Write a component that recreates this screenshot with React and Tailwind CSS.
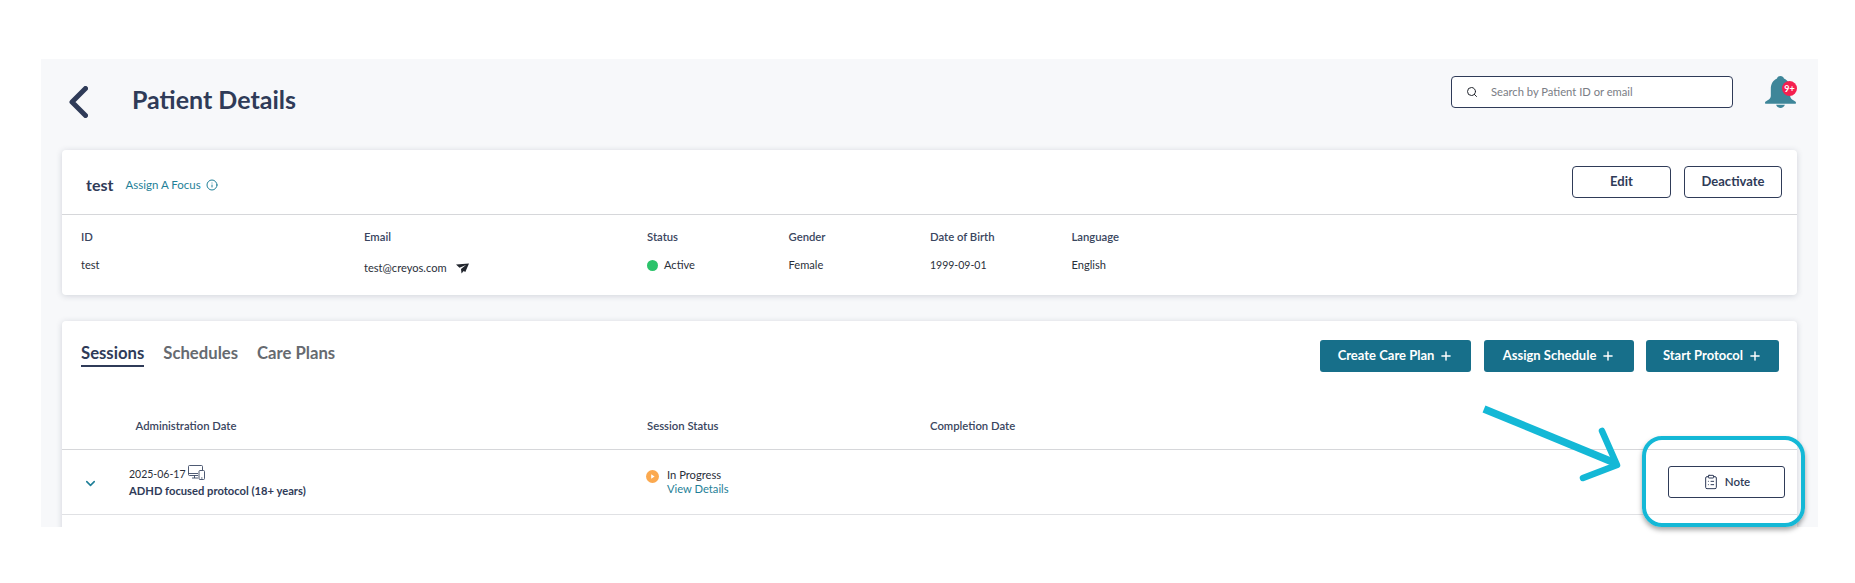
import React from 'react';
import { ChevronDown, ClipboardList, Info, Plus, Search } from 'lucide-react';

const BellIcon = () => (
  <svg width="31" height="32" viewBox="0 0 32 33" className="block">
    <path
      d="M16 0c1.8 0 3.2 1.1 3.6 2.600C23.800 4.500 26 8.500 26 13v7.500c0 2 1.400 3.300 3.300 4.400 1.700 1 2.700 1.600 2.700 2.600 0 .9-.6 1.200-1.500 1.200H1.500C.6 28.700 0 28.400 0 27.500c0-1 1-1.600 2.700-2.600C4.600 23.800 6 22.500 6 20.500V13c0-4.500 2.200-8.500 6.400-10.400C12.800 1.100 14.200 0 16 0z"
      fill="#3e8699"
    />
    <path d="M11.500 29.700h9c-.5 1.900-2.400 3.300-4.500 3.300s-4-1.400-4.500-3.300z" fill="#3e8699" />
  </svg>
);

const PlaneIcon = () => (
  <svg width="13" height="11" viewBox="0 0 13 11" className="block">
    <path d="M13 .5 0 1.500l3.500 3.200L10 2 5 6l.5 4.500 2.200-2.600 1.600 1.100z" fill="#22262e" />
  </svg>
);

const DeviceIcon = () => (
  <svg width="17" height="15" viewBox="0 0 17 15" fill="none" stroke="#3a4763" strokeWidth="0.9" className="block">
    <path d="M10 10.500H1.500a1 1 0 0 1-1-1V1.500a1 1 0 0 1 1-1h12a1 1 0 0 1 1 1V5" />
    <path d="M.5 8.500H10M4 13h6M6.500 10.500V13" />
    <rect x="11" y="5.500" width="5.500" height="9" rx="1" />
    <path d="M13 13h1.500" />
  </svg>
);

const ProgressIcon = () => (
  <svg width="13" height="13" viewBox="0 0 13 13" className="block">
    <circle cx="6.500" cy="6.500" r="6.500" fill="#fba94f" />
    <path d="M5.200 4.200 8.600 6.500 5.200 8.800z" fill="#fff" />
  </svg>
);

const Label = ({ children }) => (
  <div className="text-[11.300px] leading-4 font-semibold text-[#3a4660]">{children}</div>
);

const TealButton = ({ label, width }) => (
  <button className={`${width} h-8 flex items-center justify-center gap-[5px] rounded-[3px] bg-[#176f8a] text-white text-[13px] font-bold`}>
    {label}
    <Plus size={14} strokeWidth={2.5} />
  </button>
);

export default function App() {
  return (
    <div className="relative h-[583px] bg-white overflow-hidden text-[#2f3b58]" style={{ fontFamily: '"Lato", "Noto Sans", sans-serif' }}>
      <div className="mt-[59px] ml-[41px] w-[1777px] h-[468px] bg-[#f7f8fa] overflow-hidden">
        {/* Page header */}
        <div className="h-[91px] flex justify-between pl-[28px] pr-[21px]">
          <div className="flex items-center h-[32px] mt-[27px]">
            <svg width="19" height="32" viewBox="0 0 19 32" fill="none" stroke="#2f3b58" strokeWidth="5" strokeLinecap="round" strokeLinejoin="round">
              <path d="M16.500 2.500 3 16l13.500 13.500" />
            </svg>
            <h1 className="ml-[44px] text-[25px] font-bold leading-8 -mt-[6px]">Patient Details</h1>
          </div>
          <div className="flex pt-[17px]">
            <div className="w-[282px] h-8 flex items-center pl-[14px] rounded-[4px] border border-[#2f3b58] bg-white">
              <Search size={12} strokeWidth={2} className="text-[#22262e]" />
              <span className="ml-[13px] text-[11.200px] text-[#7a7d85]">Search by Patient ID or email</span>
            </div>
            <div className="relative ml-[32px] w-[32px]">
              <BellIcon />
              <span className="absolute left-[17px] top-[5px] w-[15px] h-[15px] rounded-full bg-[#f5204f] text-white text-[9px] font-bold leading-[15px] text-center">9+</span>
            </div>
          </div>
        </div>

        {/* Patient card */}
        <div className="mx-[21px] h-[145px] bg-white rounded-[4px] shadow-[0_1px_6px_rgba(40,50,80,0.18)]">
          <div className="h-[65px] flex justify-between border-b border-[#d6d7da] pl-[24px] pr-[15px]">
            <div className="flex items-center pt-[6px]">
              <span className="text-[16px] font-bold">test</span>
              <span className="ml-[12px] text-[11.500px] text-[#1f7f98]">Assign A Focus</span>
              <Info size={12} className="ml-[5px] text-[#1f7f98]" />
            </div>
            <div className="flex gap-[13px] pt-[16px]">
              <button className="w-[99px] h-8 rounded-[4px] border border-[#2f3b58] text-[13px] font-bold">Edit</button>
              <button className="w-[98px] h-8 rounded-[4px] border border-[#2f3b58] text-[13px] font-bold">Deactivate</button>
            </div>
          </div>
          <div className="grid grid-cols-[283px_283px_141.500px_141.500px_141.500px_141.500px] pl-[19px] pt-[14px] text-[11.100px] text-[#2a2f3a]">
            <div>
              <Label>ID</Label>
              <div className="mt-[12px] leading-4">test</div>
            </div>
            <div>
              <Label>Email</Label>
              <div className="mt-[15px] flex items-center leading-4">
                test@creyos.com
                <span className="ml-[9px]"><PlaneIcon /></span>
              </div>
            </div>
            <div>
              <Label>Status</Label>
              <div className="mt-[12px] flex items-center leading-4">
                <span className="w-[11px] h-[11px] rounded-full bg-[#2cc36b]" />
                <span className="ml-[6px]">Active</span>
              </div>
            </div>
            <div>
              <Label>Gender</Label>
              <div className="mt-[12px] leading-4">Female</div>
            </div>
            <div>
              <Label>Date of Birth</Label>
              <div className="mt-[12px] leading-4 text-[10.500px]">1999-09-01</div>
            </div>
            <div>
              <Label>Language</Label>
              <div className="mt-[12px] leading-4">English</div>
            </div>
          </div>
        </div>

        {/* Sessions card */}
        <div className="mx-[21px] mt-[26px] h-[300px] bg-white rounded-[4px] shadow-[0_1px_6px_rgba(40,50,80,0.18)]">
          <div className="flex justify-between pl-[19px] pr-[18px] pt-[19px]">
            <div className="flex gap-[19px] text-[16.700px] font-bold text-[#666a70]">
              <span className="h-[27px] leading-[26px] border-b-2 border-[#2f3b58] text-[#2f3b58]">Sessions</span>
              <span className="leading-[26px]">Schedules</span>
              <span className="leading-[26px]">Care Plans</span>
            </div>
            <div className="flex">
              <TealButton label="Create Care Plan" width="w-[151px]" />
              <div className="ml-[13px]"><TealButton label="Assign Schedule" width="w-[150px]" /></div>
              <div className="ml-[12px]"><TealButton label="Start Protocol" width="w-[133px]" /></div>
            </div>
          </div>
          <div className="h-[78px] border-b border-[#d6d7da] grid grid-cols-[511.500px_283px_1fr] items-center pt-[30px] pl-[73.500px]">
            <Label>Administration Date</Label>
            <Label>Session Status</Label>
            <Label>Completion Date</Label>
          </div>
          <div className="h-[65px] border-b border-[#e0e1e4] flex items-center pl-[21px] pr-[12px] text-[11.200px] text-[#2a2f3a]">
            <ChevronDown size={15} strokeWidth={2.5} className="text-[#1f7f98] mt-[2px]" />
            <div className="ml-[31px] w-[517px]">
              <div className="flex items-center leading-4 h-[16px] text-[10.500px]">
                2025-06-17
                <span className="ml-[2px] -mt-[2px]"><DeviceIcon /></span>
              </div>
              <div className="mt-[1px] leading-4 font-bold text-[#2f3b58]">ADHD focused protocol (18+ years)</div>
            </div>
            <div className="flex">
              <span className="mt-[2px]"><ProgressIcon /></span>
              <div className="ml-[8px] leading-[14px]">
                <div>In Progress</div>
                <div className="text-[#1f7f98]">View Details</div>
              </div>
            </div>
            <button className="ml-auto w-[117px] h-8 flex items-center justify-center gap-[6px] rounded-[3px] border border-[#2f3b58] bg-white text-[11.500px] font-semibold text-[#2f3b58]">
              <ClipboardList size={16} strokeWidth={1.5} />
              Note
            </button>
          </div>
        </div>
      </div>

      {/* Annotation */}
      <div className="absolute left-[1642px] top-[436px] w-[163px] h-[91px] rounded-[20px] border-4 border-[#14b8d6] shadow-[0_3px_5px_rgba(0,0,0,0.35)]" />
      <svg className="absolute left-[1470px] top-[400px]" width="160" height="90" viewBox="1470 400 160 90" fill="none" stroke="#14b8d6" strokeLinecap="round" strokeLinejoin="round">
        <path d="M1484 409 1615 463" strokeWidth="7.500" strokeLinecap="butt" />
        <path d="M1602 431 1617 465 1583 478" strokeWidth="6.500" />
      </svg>
    </div>
  );
}
